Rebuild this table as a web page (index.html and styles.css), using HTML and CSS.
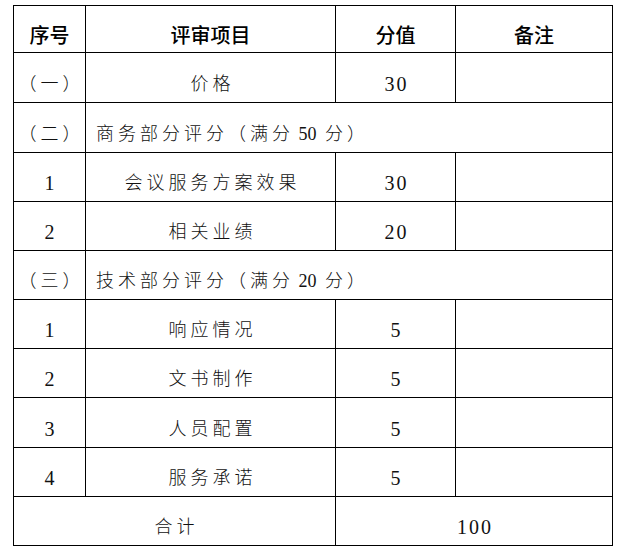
FILE: index.html
```html
<!DOCTYPE html>
<html lang="zh-CN">
<head>
<meta charset="utf-8">
<title>评审项目</title>
<link rel="stylesheet" href="styles.css">
</head>
<body>
<table class="score-table">
  <colgroup>
    <col class="c1"><col class="c2"><col class="c3"><col class="c4">
  </colgroup>
  <thead>
    <tr class="head-row">
      <th>序号</th><th>评审项目</th><th>分值</th><th>备注</th>
    </tr>
  </thead>
  <tbody>
    <tr class="r50"><td>（一）</td><td>价格</td><td class="num">30</td><td></td></tr>
    <tr class="r50"><td>（二）</td><td class="left" colspan="3">商务部分评分（满分<span class="n"> 50 </span>分）</td></tr>
    <tr><td class="num">1</td><td>会议服务方案效果</td><td class="num">30</td><td></td></tr>
    <tr><td class="num">2</td><td>相关业绩</td><td class="num">20</td><td></td></tr>
    <tr><td>（三）</td><td class="left" colspan="3">技术部分评分（满分<span class="n"> 20 </span>分）</td></tr>
    <tr><td class="num">1</td><td>响应情况</td><td class="num">5</td><td></td></tr>
    <tr><td class="num">2</td><td>文书制作</td><td class="num">5</td><td></td></tr>
    <tr class="r50"><td class="num">3</td><td>人员配置</td><td class="num">5</td><td></td></tr>
    <tr><td class="num">4</td><td>服务承诺</td><td class="num">5</td><td></td></tr>
    <tr><td colspan="2">合计</td><td class="num" colspan="2">100</td></tr>
  </tbody>
</table>
</body>
</html>
```
FILE: styles.css
```css
html, body {
  margin: 0;
  padding: 0;
  background: #ffffff;
}

body {
  padding: 5px 0 0 13px;
}

.score-table {
  border-collapse: collapse;
  table-layout: fixed;
  width: 599px;
  font-family: "Liberation Serif", "Noto Sans CJK SC", serif;
  font-size: 18px;
  font-weight: 300;
  color: #111;
}

.c1 { width: 72px; }
.c2 { width: 250px; }
.c3 { width: 120px; }
.c4 { width: 157px; }

.score-table th,
.score-table td {
  border: 1px solid #000;
  padding: 12px 0 0 4px;
  text-align: center;
  vertical-align: middle;
  letter-spacing: 4px;
  line-height: 1;
}

.score-table th {
  font-family: "Noto Sans CJK SC", sans-serif;
  font-size: 20px;
  font-weight: 500;
  letter-spacing: 0;
  padding: 12px 0 0 0;
  color: #000;
}

.head-row { height: 47px; }
.score-table tbody tr { height: 49px; }
.score-table tbody tr.r50 { height: 50px; }

.score-table td.left {
  text-align: left;
  padding-left: 10px;
}

.score-table td.num {
  font-size: 20px;
  font-weight: 400;
  letter-spacing: 2px;
  padding-left: 2px;
}

.n {
  letter-spacing: 0;
  margin-right: 4px;
}
```
